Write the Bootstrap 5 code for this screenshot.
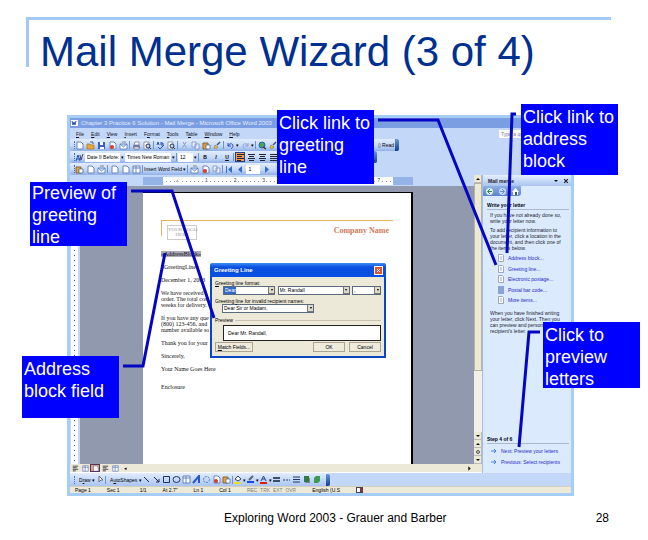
<!DOCTYPE html>
<html lang="en">
<head>
<meta charset="utf-8">
<meta name="viewport" content="width=device-width, initial-scale=1">
<title>Mail Merge Wizard (3 of 4)</title>
<link href="https://cdn.jsdelivr.net/npm/bootstrap@5.3.0/dist/css/bootstrap.min.css" rel="stylesheet">
<style>
body{font-family:"Liberation Sans",Arial,sans-serif;background:#fff;color:#000}
button,input,select{font:inherit;color:inherit;border:0;padding:0;margin:0;background:none;border-radius:0;min-width:0;white-space:nowrap}
.slide-head{margin:17px 37px 0 26px;border-top:3px solid #a5c8f0;position:relative;height:78px;padding:9px 0 0 14px}
.slide-head::before{content:"";position:absolute;left:0;top:0;width:3px;height:47px;background:#a5c8f0}
.slide-head h1{font-size:42px;line-height:46px;font-weight:400;color:#003090;margin:0;white-space:nowrap}
.stage{padding:20px 74px 0 67px}
.app{border:3px solid #a5cdf5;background:#c3d8f9;font-size:5px;line-height:6px}
.app-title{background:#7b9de2;height:10px;color:#e4edff;font-size:6px;padding-left:1px;gap:2px}
.app-menu{height:11px;padding:0 4px 0 6px;color:#112}
.app-menu nav{gap:7px}
.app-menu a,.pane a{color:inherit;text-decoration:none}
.app-menu u,.draw u{text-decoration-thickness:1px}
.ask{width:68px;height:8px;background:#fff;color:#779;padding-left:2px;font-size:5px}
.bar{height:12px;background:linear-gradient(#e2edfe,#c2d7f8 60%,#8fb0e8);border-radius:2px;padding-left:4px;gap:1px;position:relative}
.bar::before,.grip{content:"";flex:none;width:1px;height:8px;margin-right:-2px;border-left:1px dotted #456fb8}
.bar button,.draw button{flex:none;width:10px;height:10px;display:flex;align-items:center;justify-content:center}
.bar svg,.draw svg,.pane svg{width:9px;height:9px;display:block}
.bar .on{background:#f49a4c;outline:1px solid #27408b;outline-offset:-1px}
.bar select,.bar input{background:#fff;height:9px;appearance:none;padding-left:2px;font-size:5px;line-height:9px}
.bar .wide{width:auto}
.bar-end{width:4px;height:12px;background:linear-gradient(#6b95dd,#10408f);border-radius:0 2px 2px 0}
.w-std{width:329px}.w-fmt{width:307px}.w-mrg{width:240px}
.s28{width:35px}.s48{width:46px}.s16{width:15px}.s14{width:14px}
.sep{flex:none;width:1px;height:8px;background:#6f93cf}
.hruler{height:11px;background:#c3d8f9;padding:2px 61px 1px 73px}
.hruler i,.vruler i{display:block}
.hr-side{width:20px;background:#94b4e8}
.hr-main{background:#fff;color:#345;font-size:5px;line-height:7px;background-image:repeating-linear-gradient(90deg,transparent 0 3px,#99a 3px 4px);background-size:100% 1px;background-position:0 4px;background-repeat:no-repeat}
.hr-main span{background:#fff;padding:0 1px}
.vruler{width:10px;padding:0 2px 0 1px;background:#c3d8f9}
.vruler i{background:#fff repeating-linear-gradient(transparent 0 4px,#556 4px 5px) no-repeat 3px 0/1px 100%;height:100%;border-top:55px solid #94b4e8}
.desk{background:#9099ae;padding:6px 61px 0 63px}
.sheet{background:#fff;border-right:2px solid #000;border-top:1px solid #000;position:relative;height:272px;padding:27px 18px 0 18px;font-family:"Liberation Serif","Times New Roman",serif;font-size:6px;line-height:6px;color:#111}
.letterhead{border-top:1px solid #e3b45c;position:relative;padding:4px 4px 0 6px;height:31px}
.letterhead::before{content:"";position:absolute;left:0;top:0;width:1px;height:15px;background:#e3b45c}
.logo-box{border:1px solid #ccc;width:30px;height:15px;font-size:5px;color:#999;text-align:center;line-height:5px;padding-top:1px;white-space:nowrap}
.company{font-size:8px;line-height:12px;font-weight:700;color:#cf7a60}
.sheet p{margin:0 0 7px;white-space:nowrap;overflow:hidden}
.sheet .short{max-width:48px}
.sheet .field{background:#aab;display:inline-block}
.dlg{position:absolute;left:67px;right:25px;top:70px;height:95px;background:#ece9d8;border:2px solid #0c46c4;border-top:0;font:5px/6px "Liberation Sans",Arial,sans-serif;border-radius:3px 3px 0 0;color:#000}
.dlg-title{background:linear-gradient(#3b8cf5,#0a50e0 30%,#0a50e0);height:14px;color:#fff;font-weight:700;font-size:6px;margin:0 -2px;padding:0 3px 0 4px;border-radius:3px 3px 0 0}
.dlg-title button{background:#dd5537;border:1px solid #fff;width:9px;height:9px;display:flex;align-items:center;justify-content:center}
.dlg-title svg{width:5px;height:5px}
.dlg-body{padding:3px 3px 0 3px}
.pick{border:1px solid #5a6b80;background:#fff;height:9px;display:flex;align-items:center}
.pick select{appearance:none;flex:1;background:#fff;padding-left:1px;height:7px;line-height:7px}
.pick.hot select{background:linear-gradient(90deg,#316ac5 12px,#fff 12px);color:#fff}
.pick span{width:6px;height:7px;background:#ddd8c8;border:1px solid #777;border-width:0 0 1px 1px;display:flex;align-items:center;justify-content:center}
.pick span::after{content:"";border:1px solid transparent;border-top:2px solid #000;border-bottom:0}
.p-a{width:52px}.p-b{width:72px}.p-c{width:29px}.p-d{width:92px;margin-left:7px}
.second{margin-top:3px}
.dlg fieldset{border-top:1px solid #c9c4b0;margin:4px 0 0;height:25px;position:relative}
.dlg legend{font-size:5px;line-height:6px;float:none;width:auto;margin:-3px 0 0;padding-right:2px;background:#ece9d8}
.pv{border:1px solid #222;background:#fff;height:16px;margin:2px 0 0 8px;padding:4px}
.xpb{background:#eeebdd;border:1px solid #fff;border-right-color:#666;border-bottom-color:#666;outline:1px solid #aaa591;outline-offset:-1px;height:10px;width:32px;line-height:8px}
.xpb.wider{width:38px}
.vscroll{width:8px;background:#f2f0e8}
.vscroll button{display:flex;width:8px;height:8px;background:#ece9d8;border:1px solid #bbb;border-width:0 1px 1px 0;align-items:center;justify-content:center}
.vscroll .thumb{height:188px;background:#ece9d8;border:1px solid #b8b49f}
.vscroll svg{width:6px;height:6px}
.hscroll{background:#ece9d8;height:9px;border-bottom:1px solid #fff}
.hscroll svg{width:7px;height:7px}
.hscroll button{display:flex;width:10px;height:8px;align-items:center;justify-content:center}
.hscroll .on{background:#e7a36a;outline:1px solid #5a2f5a;outline-offset:-1px}
.pane{width:89px;background:#dbebfd;color:#223;border-left:1px solid #a5bde6}
.pane-head{height:11px;background:linear-gradient(#e6f0fe,#a9c4f0);padding:0 2px 0 5px;font-weight:700}
.pane-head svg{width:6px;height:6px}
.pane-nav{background:linear-gradient(#8fb0e6,#5d83c8);width:38px;height:10px;border-radius:0 0 3px 0;gap:1px;margin-bottom:6px}
.pane-nav button{width:12px;display:flex;justify-content:center}
.pane h2{font-size:5px;line-height:7px;font-weight:700;margin:0 2px 2px 4px;border-bottom:1px solid #a9b9d2;color:#001}
.pane p{margin:0 0 2px 7px;white-space:nowrap;line-height:6px}
.pane .first{margin-bottom:3px}
.pane ul{list-style:none;margin:0;padding:0 0 0 15px}
.pane li{height:10px;margin-bottom:1px;display:flex;align-items:center;gap:4px;color:#2626c8;white-space:nowrap}
.pane li:nth-child(even){margin-bottom:0}
.pane li svg{width:6px;height:8px}
.steps{padding-bottom:6px}
.draw{height:13px;background:linear-gradient(#e2edfe,#a9c5f1);padding-left:4px;font-size:5px;width:260px;border-radius:0 2px 2px 0}
.draw .wide{width:auto;display:block}
.status{background:#ece9d8;height:7px;font-size:5px;line-height:7px;padding-left:5px;border-top:1px solid #d3cfbc}
.status span{flex:none}
.callout{position:absolute;width:97px;background:#00f;color:#fff;font-size:18px;line-height:22px;padding:2px;margin:0}
.c1{left:277px;top:110px;height:74px}.c2{right:30px;top:104px;height:71px}
.c3{left:30px;top:182px;height:64px;padding-top:0}.c4{right:8px;top:322px;height:66px}
.c5{left:22px;top:356px;height:62px}
.wires{position:absolute;left:0;top:0;width:648px;height:540px;pointer-events:none;fill:none;stroke:#0505c4;stroke-width:3}
.foot{font-size:12px;line-height:14px;padding:15px 39px 0 224px}
</style>
<script src="https://cdn.jsdelivr.net/npm/bootstrap@5.3.0/dist/js/bootstrap.bundle.min.js"></script>
</head>
<body>
<svg width="0" height="0" class="position-absolute" aria-hidden="true">
<symbol id="doc" viewBox="0 0 9 9"><path d="M2 1h4l2 2v5H2z" fill="#fff" stroke="#6c84b8"/></symbol>
<symbol id="fold" viewBox="0 0 9 9"><path d="M1 3h3l1 1h3v4H1z" fill="#e8a83a" stroke="#a87420" stroke-width=".7"/><path d="M4 1h3v2" fill="none" stroke="#468"/></symbol>
<symbol id="disk" viewBox="0 0 9 9"><path d="M1 1h7v7H1z" fill="#3d5fb8"/><path d="M3 1h3v3H3zM3 6h4v2H3z" fill="#fff"/></symbol>
<symbol id="perm" viewBox="0 0 9 9"><path d="M2 1h4l2 2v5H2z" fill="#fff" stroke="#6c84b8"/><circle cx="4" cy="6" r="2" fill="#d23b2b"/></symbol>
<symbol id="mail" viewBox="0 0 9 9"><path d="M1 3h7v5H1zM1 3l3.500 3L8 3" fill="#fff" stroke="#5577b5" stroke-width=".8"/><path d="M3 1h4" stroke="#888"/></symbol>
<symbol id="print" viewBox="0 0 9 9"><path d="M1 4h7v3H1z" fill="#7e8dad"/><path d="M3 1h4v3H2zM2 6h5v2H2z" fill="#fff" stroke="#557" stroke-width=".6"/></symbol>
<symbol id="look" viewBox="0 0 9 9"><path d="M1 1h5v7H1z" fill="#fff" stroke="#678" stroke-width=".7"/><circle cx="5" cy="5" r="2" fill="#bde" stroke="#335"/><path d="M6 6l2 2" stroke="#335"/></symbol>
<symbol id="spell" viewBox="0 0 9 9"><path d="M1 4l1-3 1 3M5 1v3h2V2H5M2 6l2 2 4-4" fill="none" stroke="#2a52b5"/></symbol>
<symbol id="cut" viewBox="0 0 9 9"><path d="M3 1l3 5M6 1L3 6M2 7h1M6 7h1" stroke="#8c9dc0" stroke-width="1" fill="none"/></symbol>
<symbol id="copy" viewBox="0 0 9 9"><path d="M1 1h4v5H1zM4 3h4v5H4z" fill="#e8eefb" stroke="#7d93c5" stroke-width=".8"/></symbol>
<symbol id="paste" viewBox="0 0 9 9"><path d="M1 2h5v6H1z" fill="#e0a33d" stroke="#864"/><path d="M4 4h4v4H4z" fill="#fff" stroke="#468" stroke-width=".7"/></symbol>
<symbol id="brush" viewBox="0 0 9 9"><path d="M7 1L4 4" stroke="#456" stroke-width="1.500"/><path d="M2 4l3 2-2 2-2-1z" fill="#edbe31" stroke="#764" stroke-width=".5"/></symbol>
<symbol id="undo" viewBox="0 0 9 9"><path d="M2 2v3h3M2 5c1-3 5-3 5 0 0 1-1 2-2 3" fill="none" stroke="#2b4db5"/></symbol>
<symbol id="redo" viewBox="0 0 9 9"><path d="M7 2v3H4M7 5C6 2 2 2 2 5c0 1 1 2 2 3" fill="none" stroke="#8fa2cc"/></symbol>
<symbol id="globe" viewBox="0 0 9 9"><circle cx="4" cy="4" r="3" fill="#49a35e" stroke="#2b5fae"/><path d="M5 6l3 2" stroke="#334" stroke-width="1.500"/></symbol>
<symbol id="tbl" viewBox="0 0 9 9"><path d="M1 1h7v7H1zM1 3h7M4 1v7" fill="#fff" stroke="#4a6db4" stroke-width=".8"/></symbol>
<symbol id="al" viewBox="0 0 9 9"><path d="M1 1.500h7M1 3.500h5M1 5.500h7M1 7.500h4" stroke="#223"/></symbol>
<symbol id="ac" viewBox="0 0 9 9"><path d="M1 1.500h7M2 3.500h5M1 5.500h7M2 7.500h5" stroke="#223"/></symbol>
<symbol id="aj" viewBox="0 0 9 9"><path d="M1 1.500h7M1 3.500h7M1 5.500h7M1 7.500h7" stroke="#223"/></symbol>
<symbol id="x" viewBox="0 0 5 5"><path d="M1 1l3 3M4 1L1 4" stroke="currentColor"/></symbol>
<symbol id="prev" viewBox="0 0 9 9"><path d="M6 1v7L2 4.500z" fill="#386bd0"/></symbol>
<symbol id="next" viewBox="0 0 9 9"><path d="M3 1v7l4-3.500z" fill="#386bd0"/></symbol>
<symbol id="first" viewBox="0 0 9 9"><path d="M7 1v7L3 4.500zM1 1h1v7H1z" fill="#386bd0"/></symbol>
<symbol id="dn" viewBox="0 0 6 6"><path d="M1 2h4L3 4z" fill="#111"/></symbol>
<symbol id="up" viewBox="0 0 6 6"><path d="M1 4h4L3 2z" fill="#111"/></symbol>
<symbol id="dot" viewBox="0 0 6 6"><circle cx="3" cy="3" r="1.500" fill="#ccc" stroke="#333" stroke-width=".8"/></symbol>
<symbol id="rt" viewBox="0 0 6 6"><path d="M2 1v4l2-2z" fill="#111"/></symbol>
<symbol id="go" viewBox="0 0 6 8"><path d="M0 4h5M3 2l2 2-2 2" fill="none" stroke="#4a7ed2"/></symbol>
<symbol id="ldoc" viewBox="0 0 6 8"><path d="M.5.500h4l1 1v6h-5zM2 3h2M2 5h2" fill="#fff" stroke="#8795ad" stroke-width=".8"/></symbol>
</svg>

<header class="slide-head"><h1>Mail Merge Wizard (3 of 4)</h1></header>

<main class="stage">
<div class="app overflow-hidden">
  <div class="app-title d-flex align-items-center text-nowrap"><svg width="8" height="8" viewBox="0 0 8 8"><path d="M0 1h7v6H0z" fill="#fff"/><path d="M1 2l1 4 1-3 1 3 1-4" fill="none" stroke="#2c50b0"/></svg><span>Chapter 3 Practice 6 Solution - Mail Merge - Microsoft Office Word 2003</span></div>
  <div class="app-menu d-flex align-items-center justify-content-between">
    <nav class="d-flex"><a href="#"><u>F</u>ile</a><a href="#"><u>E</u>dit</a><a href="#"><u>V</u>iew</a><a href="#"><u>I</u>nsert</a><a href="#">F<u>o</u>rmat</a><a href="#"><u>T</u>ools</a><a href="#">T<u>a</u>ble</a><a href="#"><u>W</u>indow</a><a href="#"><u>H</u>elp</a></nav>
    <input class="ask" aria-label="Type a question" value="Type a question for help">
  </div>
  <div class="bar w-std d-flex align-items-center">
    <button aria-label="New"><svg><use href="#doc"/></svg></button><button aria-label="Open"><svg><use href="#fold"/></svg></button><button aria-label="Save"><svg><use href="#disk"/></svg></button><button aria-label="Permission"><svg><use href="#perm"/></svg></button><button aria-label="Mail"><svg><use href="#mail"/></svg></button><i class="sep"></i><button aria-label="Print"><svg><use href="#print"/></svg></button><button aria-label="Preview"><svg><use href="#look"/></svg></button><i class="sep"></i><button aria-label="Spelling"><svg><use href="#spell"/></svg></button><button aria-label="Research"><svg><use href="#look"/></svg></button><i class="sep"></i><button aria-label="Cut"><svg><use href="#cut"/></svg></button><button aria-label="Copy"><svg><use href="#copy"/></svg></button><button aria-label="Paste"><svg><use href="#paste"/></svg></button><button aria-label="Format painter"><svg><use href="#brush"/></svg></button><i class="sep"></i><button aria-label="Undo"><svg><use href="#undo"/></svg></button><span>▾</span><button aria-label="Redo"><svg><use href="#redo"/></svg></button><span>▾</span><i class="sep"></i><button aria-label="Hyperlink"><svg><use href="#globe"/></svg></button><button aria-label="Tables"><svg><use href="#brush"/></svg></button>
    <button class="wide ms-auto">▯ Read</button><i class="bar-end"></i>
  </div>
  <div class="bar w-fmt d-flex align-items-center">
    <button aria-label="Styles"><svg viewBox="0 0 9 9"><path d="M1 8l2-6 2 6M2 6h3" fill="none" stroke="#2450b8"/><path d="M5 2l1 5 2-6" fill="none" stroke="#446"/></svg></button>
    <select class="s28" aria-label="Style"><option>Date II Before:</option></select><span>▾</span>
    <select class="s48" aria-label="Font"><option>Times New Roman</option></select><span>▾</span><i class="sep"></i>
    <select class="s16" aria-label="Size"><option>12</option></select><span>▾</span><i class="sep"></i>
    <button class="fw-bold">B</button><button class="fst-italic fw-bold">I</button><button class="text-decoration-underline fw-bold">U</button><i class="sep"></i>
    <button class="on" aria-label="Left"><svg><use href="#al"/></svg></button><button aria-label="Center"><svg><use href="#ac"/></svg></button><button aria-label="Right"><svg><use href="#ac"/></svg></button><button aria-label="Justify"><svg><use href="#aj"/></svg></button>
    <i class="bar-end ms-auto"></i>
  </div>
  <div class="bar w-mrg d-flex align-items-center">
    <button aria-label="Setup"><svg><use href="#paste"/></svg></button><button aria-label="Data source"><svg><use href="#doc"/></svg></button><button aria-label="Recipients"><svg><use href="#mail"/></svg></button><i class="sep"></i><button aria-label="Address block"><svg><use href="#doc"/></svg></button><button aria-label="Greeting line"><svg><use href="#doc"/></svg></button><button aria-label="Merge fields"><svg><use href="#tbl"/></svg></button><i class="sep"></i>
    <button class="wide">Insert Word Field ▾</button><i class="sep"></i>
    <button aria-label="View merged"><svg><use href="#mail"/></svg></button><button aria-label="Highlight"><svg><use href="#perm"/></svg></button><button aria-label="Match fields"><svg><use href="#copy"/></svg></button><i class="sep"></i><button aria-label="First"><svg><use href="#first"/></svg></button><button aria-label="Previous"><svg><use href="#prev"/></svg></button><input class="s14" aria-label="Record" value="1"><button aria-label="Next"><svg><use href="#next"/></svg></button>
  </div>

  <div class="d-flex">
    <div class="flex-grow-1">
      <div class="d-flex">
        <div class="flex-grow-1">
          <div class="hruler d-flex"><i class="hr-side"></i><div class="hr-main flex-grow-1 d-flex justify-content-around"><span>▵</span><span>1</span><span>2</span><span>3</span><span>4</span><span>5</span><span>6</span><span>7</span></div><i class="hr-side"></i></div>
          <div class="d-flex">
            <div class="vruler"><i></i></div>
            <div class="desk flex-grow-1">
              <article class="sheet">
                <div class="letterhead d-flex justify-content-between"><div class="logo-box">YOUR LOGO<br>HERE</div><div class="company">Company Name</div></div>
                <p><span class="field">«AddressBlock»</span></p>
                <p>«GreetingLine»</p>
                <p class="short">December 1, 2003</p>
                <p class="short">We have received<br>order. The total cost<br>weeks for delivery.</p>
                <p class="short">If you have any que<br>(800) 123-456, and<br>number available so</p>
                <p class="short">Thank you for your</p>
                <p>Sincerely,</p>
                <p class="mb-2">Your Name Goes Here</p>
                <p class="pt-1">Enclosure</p>
                <form class="dlg">
                  <div class="dlg-title d-flex align-items-center justify-content-between"><span>Greeting Line</span><button type="button" aria-label="Close"><svg><use href="#x"/></svg></button></div>
                  <div class="dlg-body">
                    <label for="g1" class="d-block"><u>G</u>reeting line format:</label>
                    <div class="d-flex justify-content-between ps-2">
                      <div class="pick hot p-a"><select id="g1"><option>Dear</option></select><span></span></div>
                      <div class="pick p-b"><select aria-label="Name format"><option>Mr. Randall</option></select><span></span></div>
                      <div class="pick p-c"><select aria-label="Punctuation"><option>,</option></select><span></span></div>
                    </div>
                    <label for="g2" class="d-block second">Greeting <u>l</u>ine for invalid recipient names:</label>
                    <div class="pick p-d"><select id="g2"><option>Dear Sir or Madam,</option></select><span></span></div>
                    <fieldset><legend>Preview</legend><div class="pv">Dear Mr. Randall,</div></fieldset>
                    <div class="d-flex gap-1"><button type="button" class="xpb wider me-auto"><u>M</u>atch Fields...</button><button type="button" class="xpb">OK</button><button type="button" class="xpb">Cancel</button></div>
                  </div>
                </form>
              </article>
            </div>
          </div>
        </div>
        <div class="vscroll d-flex flex-column">
          <button aria-label="Up"><svg><use href="#up"/></svg></button><div class="thumb mb-auto"></div>
          <button aria-label="Down"><svg><use href="#dn"/></svg></button><button aria-label="Previous page"><svg><use href="#up"/></svg></button><button aria-label="Browse"><svg><use href="#dot"/></svg></button><button aria-label="Next page"><svg><use href="#dn"/></svg></button>
        </div>
      </div>
      <div class="hscroll d-flex pe-2">
        <button aria-label="Normal"><svg><use href="#al"/></svg></button><button aria-label="Web"><svg><use href="#tbl"/></svg></button><button class="on" aria-label="Print layout"><svg><use href="#doc"/></svg></button><button aria-label="Outline"><svg><use href="#al"/></svg></button><button aria-label="Reading"><svg><use href="#tbl"/></svg></button><button class="me-auto" aria-label="Left">◂</button><button aria-label="Right"><svg><use href="#rt"/></svg></button>
      </div>
    </div>
    <aside class="pane d-flex flex-column">
      <div class="pane-head d-flex align-items-center"><span class="me-auto">Mail merge</span><svg class="me-1"><use href="#dn"/></svg><button aria-label="Close pane"><svg><use href="#x"/></svg></button></div>
      <div class="pane-nav d-flex align-items-center"><button aria-label="Back"><svg viewBox="0 0 9 9"><circle cx="4.500" cy="4.500" r="3.500" fill="#dff0e4"/><path d="M7 4.500H3M5 2L2.500 4.500 5 7" fill="none" stroke="#2d8a48"/></svg></button><button aria-label="Forward"><svg viewBox="0 0 9 9"><circle cx="4.500" cy="4.500" r="3.500" fill="#c5d9f5"/><path d="M2 4.500h4M4 2l2.500 2.500L4 7" fill="none" stroke="#6a8ec8"/></svg></button><button aria-label="Home"><svg viewBox="0 0 9 9"><path d="M1 5l3.500-4L8 5H7v3H2V5z" fill="#fff"/><path d="M4 5h2v3H4z" fill="#456"/></svg></button></div>
      <h2>Write your letter</h2>
      <p class="first">If you have not already done so,<br>write your letter now.</p>
      <p>To add recipient information to<br>your letter, click a location in the<br>document, and then click one of<br>the items below.</p>
      <ul>
        <li><svg><use href="#ldoc"/></svg><a href="#">Address block...</a></li>
        <li><svg><use href="#ldoc"/></svg><a href="#">Greeting line...</a></li>
        <li><svg><use href="#ldoc"/></svg><a href="#">Electronic postage...</a></li>
        <li><svg viewBox="0 0 6 8"><path d="M1 0v8M3 0v8M5 0v8" stroke="#3b5dab"/></svg><a href="#">Postal bar code...</a></li>
        <li><svg><use href="#ldoc"/></svg><a href="#">More items...</a></li>
      </ul>
      <p class="mb-auto pt-1">When you have finished writing<br>your letter, click Next. Then you<br>can preview and personalize each<br>recipient's letter.</p>
      <div class="steps"><h2>Step 4 of 6</h2>
      <ul class="ps-2"><li><svg><use href="#go"/></svg><a href="#">Next: Preview your letters</a></li><li><svg><use href="#go"/></svg><a href="#">Previous: Select recipients</a></li></ul></div>
    </aside>
  </div>

  <div class="draw d-flex align-items-center">
    <i class="grip me-1"></i><button class="wide">D<u>r</u>aw ▾</button><button aria-label="Select"><svg viewBox="0 0 9 9"><path d="M3 1v6l2-2h2z" fill="#fff" stroke="#667"/></svg></button><i class="sep"></i>
    <button class="wide ms-1">A<u>u</u>toShapes ▾</button>
    <button aria-label="Line"><svg viewBox="0 0 9 9"><path d="M2 2l5 5" stroke="#225"/></svg></button><button aria-label="Arrow"><svg viewBox="0 0 9 9"><path d="M2 2l5 5M7 4v3H4" stroke="#225" fill="none"/></svg></button><button aria-label="Rectangle"><svg viewBox="0 0 9 9"><path d="M1.500 1.500h6v6h-6z" fill="none" stroke="#236"/></svg></button><button aria-label="Oval"><svg viewBox="0 0 9 9"><ellipse cx="4.500" cy="4.500" rx="3.500" ry="3" fill="none" stroke="#236"/></svg></button><button aria-label="Text box"><svg><use href="#tbl"/></svg></button><button aria-label="WordArt"><svg viewBox="0 0 9 9"><path d="M1 8l6-7v7" fill="none" stroke="#2858c8" stroke-width="2"/></svg></button><button aria-label="Diagram"><svg viewBox="0 0 9 9"><circle cx="4.500" cy="4.500" r="3" fill="none" stroke="#47b" stroke-dasharray="2 1"/></svg></button><button aria-label="Clip art"><svg><use href="#perm"/></svg></button><button aria-label="Picture"><svg><use href="#paste"/></svg></button><i class="sep"></i>
    <button aria-label="Fill"><svg viewBox="0 0 9 9"><path d="M2 4l3-3 3 3-3 2z" fill="#fff" stroke="#345"/><path d="M1 7h7v2H1z" fill="#f0e020"/></svg></button><span>▾</span><button aria-label="Line color"><svg viewBox="0 0 9 9"><path d="M3 5l4-4" stroke="#567" stroke-width="2"/><path d="M1 6h7v2H1z" fill="#1c49dd"/></svg></button><span>▾</span><button aria-label="Font color"><svg viewBox="0 0 9 9"><path d="M2 6l2.500-5L7 6M3 4h3" fill="none" stroke="#248"/><path d="M1 7h7v2H1z" fill="#e01818"/></svg></button><span>▾</span><button aria-label="Line style"><svg viewBox="0 0 9 9"><path d="M1 3h7M1 6h7" stroke="#123" stroke-width="1.500"/></svg></button><button aria-label="Dash"><svg viewBox="0 0 9 9"><path d="M1 5h7" stroke="#345" stroke-dasharray="2 1"/></svg></button><button aria-label="Arrow style"><svg viewBox="0 0 9 9"><path d="M1 2h7M1 4.500h7M1 7h7" stroke="#236"/></svg></button><button aria-label="Shadow"><svg viewBox="0 0 9 9"><path d="M3 3h5v5H3z" fill="#789"/><path d="M2 1h5v6H2z" fill="#2d7c45"/></svg></button><button aria-label="3-D"><svg viewBox="0 0 9 9"><path d="M2 3l2-2h4v5L6 8H2z" fill="#3c9a55"/></svg></button><i class="bar-end ms-auto"></i>
  </div>
  <div class="status d-flex gap-3"><span>Page 1</span><span>Sec 1</span><span class="ms-1">1/1</span><span>At 2.7"</span><span>Ln 1</span><span>Col 1</span><span class="text-black-50">REC&nbsp; TRK&nbsp; EXT&nbsp; OVR</span><span class="me-n2">English (U.S</span><svg width="8" height="6" viewBox="0 0 8 6"><path d="M0 0h7v6H0z" fill="#445"/><path d="M1 1h3v4H1z" fill="#fff"/><path d="M4 1l3 4" stroke="#d22"/></svg></div>
</div>
</main>

<svg class="wires" viewBox="0 0 648 540" aria-hidden="true"><path d="M378 120H438L496 265M516 114H512L507 253M131 191H172L214 318M123 366H143L165 253M540 332H529L519 447"/></svg>
<p class="callout c1">Click link to greeting line</p>
<p class="callout c2">Click link to address block</p>
<p class="callout c3">Preview of greeting line</p>
<p class="callout c4">Click to preview letters</p>
<p class="callout c5">Address block field</p>

<footer class="foot d-flex justify-content-between"><span>Exploring Word 2003 - Grauer and Barber</span><span>28</span></footer>
</body>
</html>
